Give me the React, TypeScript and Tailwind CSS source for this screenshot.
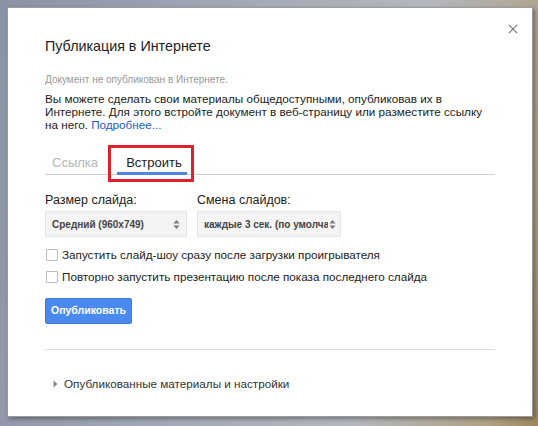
import React from "react";

const font = { fontFamily: '"Liberation Sans", Arial, sans-serif' };

const SelectBox = ({ label, wide }: { label: string; wide?: boolean }) => {
  return (
    <div
      className={
        wide
          ? "flex items-center w-[144px] h-[26px] bg-[#f4f4f4] border border-[#e4e4e4] rounded-[2px] pl-[6px] pr-[4px]"
          : "flex items-center w-[142px] h-[26px] bg-[#f4f4f4] border border-[#e4e4e4] rounded-[2px] pl-[6px] pr-[6px]"
      }
    >
      <span className="flex-1 text-[10px] font-bold text-[#444] whitespace-nowrap overflow-hidden">{label}</span>
      <svg width="7" height="11" viewBox="0 0 7 11" className="shrink-0 ml-[1px]">
        <path d="M3.5 1 L6.5 4.5 L0.5 4.5 Z" fill="#777" />
        <path d="M3.5 10 L6.5 6.5 L0.5 6.5 Z" fill="#777" />
      </svg>
    </div>
  );
};

const CheckRow = ({ label }: { label: string }) => {
  return (
    <label className="flex items-center h-[22px]">
      <span className="ml-[1px] w-[12px] h-[12px] border border-[#bdbdbd] rounded-[1px] bg-white shrink-0" />
      <span className="ml-[4px] text-[11.7px] text-[#222] whitespace-nowrap">{label}</span>
    </label>
  );
};

export default function App() {
  return (
    <div
      className="w-[538px] h-[426px] overflow-hidden pt-[7px] pl-[7px] bg-[linear-gradient(100deg,#8a93a5_0%,#a0a7b5_35%,#b4b7be_70%,#b0a184_92%,#9c8862_100%)]"
      style={font}
    >
      <div className="relative w-[526px] h-[410px] bg-white border border-[#9c9c9c] shadow-[2px_2px_4px_rgba(0,0,0,0.35)] pl-[37px] pt-[29px]">
        <button className="absolute right-[14px] top-[16px]">
          <svg width="10" height="10" viewBox="0 0 10 10" className="block">
            <path d="M0.8 0.8 L9.2 9.2 M9.2 0.8 L0.8 9.2" stroke="#777" strokeWidth="1.2" />
          </svg>
        </button>

        <h1 className="text-[14.3px] leading-[18px] text-[#222]">Публикация в Интернете</h1>

        <div className="mt-[19px] text-[10px] leading-[12px] text-[#999]">Документ не опубликован в Интернете.</div>

        <p className="mt-[6px] w-[446px] text-[11.7px] leading-[13px] text-[#222]">
          Вы можете сделать свои материалы общедоступными, опубликовав их в Интернете. Для этого встройте
          документ в веб-страницу или разместите ссылку на него. <a className="text-[#1a5bcc]">Подробнее...</a>
        </p>

        <div className="mt-[13px] w-[450px] h-[31px] flex items-start border-b border-[#d0d0d0]">
          <div className="ml-[7px] w-[56px] h-[30px] flex items-center pt-[8px] text-[13px] leading-[16px] text-[#b5b5b5]">
            Ссылка
          </div>
          <div className="mt-[1px] w-[86px] h-[37px] border-[3px] border-[#e0202a] flex flex-col items-center">
            <span className="mt-[7px] ml-[6px] text-[13px] leading-[16px] text-[#222]">Встроить</span>
            <span className="mt-[1px] ml-[2px] w-[70px] h-[3px] bg-[#4f86dd]" />
          </div>
        </div>

        <div className="mt-[18px] flex gap-[10px]">
          <div className="flex flex-col gap-[3px]">
            <span className="text-[12.5px] leading-[15px] text-[#222]">Размер слайда:</span>
            <SelectBox label="Средний (960x749)" />
          </div>
          <div className="flex flex-col gap-[3px]">
            <span className="text-[12.5px] leading-[15px] text-[#222]">Смена слайдов:</span>
            <SelectBox label="каждые 3 сек. (по умолчанию)" wide />
          </div>
        </div>

        <div className="mt-[7px] flex flex-col">
          <CheckRow label="Запустить слайд-шоу сразу после загрузки проигрывателя" />
          <CheckRow label="Повторно запустить презентацию после показа последнего слайда" />
        </div>

        <button className="mt-[10px] block w-[87px] h-[26px] bg-[#4a8af0] border border-[#3f7ddc] rounded-[2px] text-white text-[10.5px] font-bold">
          Опубликовать
        </button>

        <div className="mt-[25px] w-[450px] border-t border-[#e0e0e0]" />

        <div className="mt-[26px] flex items-center h-[16px]">
          <svg width="5" height="8" viewBox="0 0 5 8" className="ml-[8px]">
            <path d="M0.5 0.5 L4.5 4 L0.5 7.5 Z" fill="#888" />
          </svg>
          <span className="ml-[6px] text-[11.7px] leading-[16px] text-[#333]">Опубликованные материалы и настройки</span>
        </div>
      </div>
    </div>
  );
}
